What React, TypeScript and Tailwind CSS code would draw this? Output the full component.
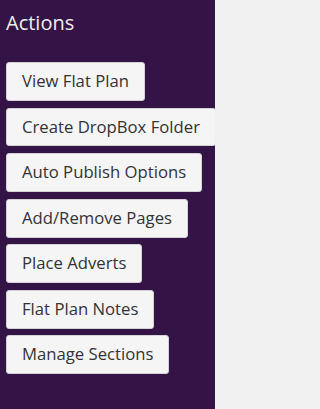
const actions = [
  "View Flat Plan",
  "Create DropBox Folder",
  "Auto Publish Options",
  "Add/Remove Pages",
  "Place Adverts",
  "Flat Plan Notes",
  "Manage Sections",
];

export default function App() {
  return (
    <div className="flex min-h-[409px] bg-[#f0f0f0] font-['Open_Sans',sans-serif]">
      <div className="w-[215px] overflow-hidden bg-[#341446] px-[6px] pb-6">
        <h2 className="pt-[12px] text-[20px] leading-[22px] font-normal text-[#eeeeee]">Actions</h2>
        <div className="mt-[28px] flex flex-col items-start gap-[6.7px]">
          {actions.map((label) => (
            <button
              key={label}
              className="shrink-0 whitespace-nowrap rounded-[3px] border border-[#d4d4d4] bg-[#f5f5f5] px-[15px] py-[7px] text-[16.7px] leading-[22.86px] text-[#333333]"
            >
              {label}
            </button>
          ))}
        </div>
      </div>
    </div>
  );
}
